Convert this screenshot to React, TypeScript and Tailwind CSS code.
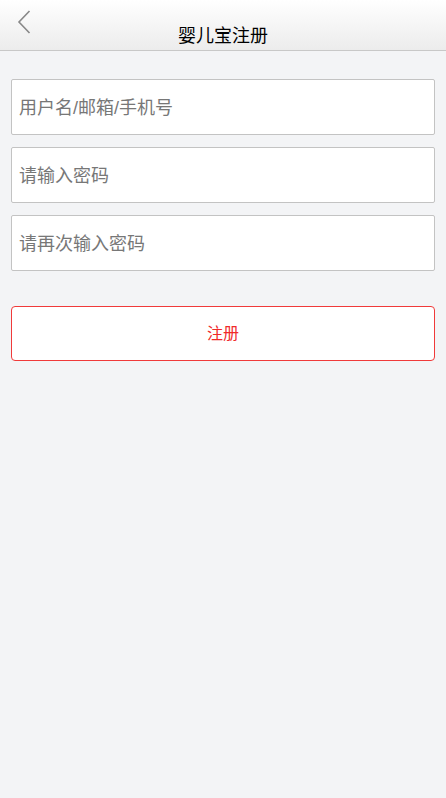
import { useState } from 'react';

const fontStack = '"Liberation Sans", "Noto Sans CJK SC", sans-serif';

function Field({ placeholder, type = 'text' }: { placeholder: string; type?: string }) {
  const [value, setValue] = useState('');
  return (
    <input
      type={type}
      value={value}
      onChange={(e) => setValue(e.target.value)}
      placeholder={placeholder}
      className="block h-[56px] w-full rounded-[2px] border border-[#c3c3c3] bg-white px-[7px] pt-[3px] text-[18px] text-[#333] outline-none placeholder:text-[#777]"
    />
  );
}

export default function App() {
  return (
    <div className="min-h-[798px] bg-[#f3f4f6]" style={{ fontFamily: fontStack }}>
      {/* Header */}
      <div className="relative h-[51px] border-b border-[#c8c8c8] bg-gradient-to-b from-white to-[#ececec]">
        <button className="absolute left-[14px] top-[9px] flex h-[26px] w-[20px] items-center justify-center">
          <svg width="14" height="24" viewBox="0 0 14 24" fill="none">
            <path d="M12.5 1 L2 12 L12.5 23" stroke="#888" strokeWidth="1.6" />
          </svg>
        </button>
        <h1 className="pt-[25px] text-center text-[18px] leading-[22px] text-black">婴儿宝注册</h1>
      </div>

      {/* Form */}
      <div className="flex flex-col gap-[12px] px-[11px] pt-[28px]">
        <Field placeholder="用户名/邮箱/手机号" />
        <Field placeholder="请输入密码" type="password" />
        <Field placeholder="请再次输入密码" type="password" />
      </div>

      <div className="px-[11px] pt-[35px]">
        <button className="h-[55px] w-full rounded-[4px] border border-[#f03a3a] bg-white text-[16px] text-[#f02a2a]">
          注册
        </button>
      </div>
    </div>
  );
}
